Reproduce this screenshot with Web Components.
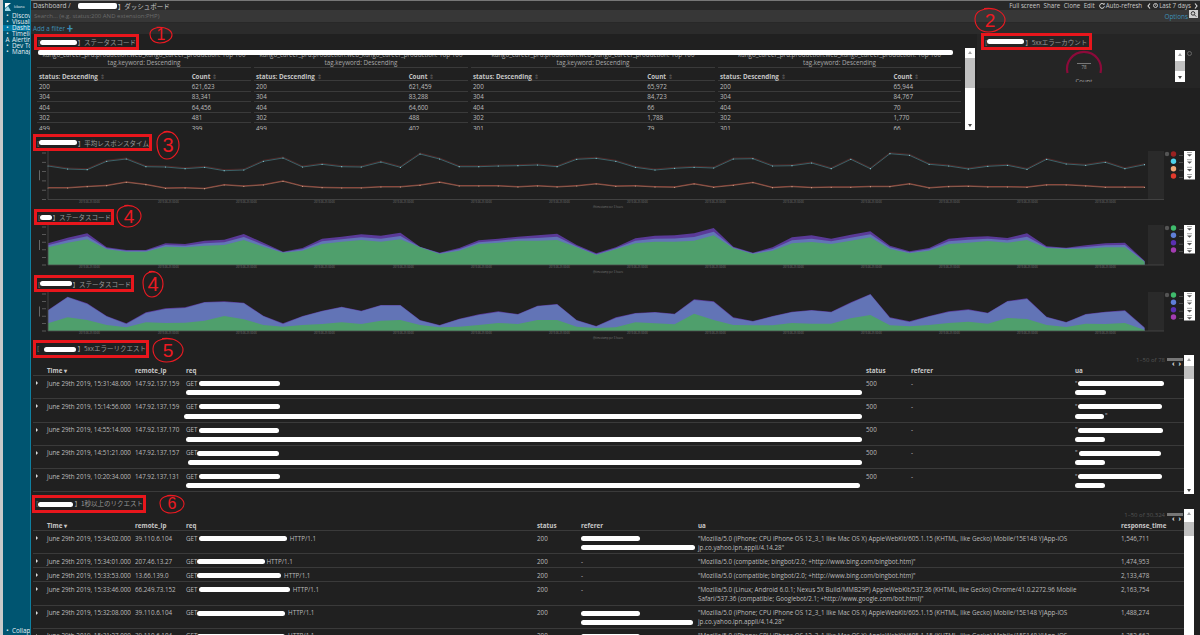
<!DOCTYPE html>
<html lang="ja">
<head>
<meta charset="utf-8">
<title>Dashboard</title>
<style>
  html, body { margin: 0; padding: 0; background: #202020; }
  body {
    width: 1200px;
    height: 635px;
    overflow: hidden;
    font-family: "Open Sans", "Noto Sans CJK JP", sans-serif;
    font-size: 6.25px;
    color: #bcbcbc;
  }
  k-blob { margin-right: 1px; }
</style>
</head>
<body>
<k-app>
  <k-rail slot="rail"></k-rail>

  <k-topbar></k-topbar>

  <k-row>
    <k-status-panel>
      <k-title style="width:105px;height:16px;margin:0 0 0 3px">[<k-blob w="38"></k-blob>】ステータスコード</k-title>
    </k-status-panel>
    <k-gauge-panel>
      <k-title style="width:111px;height:17px;margin:-1px 0 0 4px">[<k-blob w="37"></k-blob>】5xxエラーカウント</k-title>
    </k-gauge-panel>
  </k-row>

  <k-chart-panel style="height:74px">
    <k-title style="width:119px;height:17px;margin:0 0 0 2px">[<k-blob w="39"></k-blob>】平均レスポンスタイム</k-title>
    <k-chart kind="line" top="151" height="57" base="199.5" series="response"></k-chart>
  </k-chart-panel>
  <k-chart-panel style="height:66px">
    <k-title style="width:80px;height:16px;margin:1px 0 0 3px">[<k-blob w="14"></k-blob>】ステータスコード</k-title>
    <k-chart kind="area" top="225" height="49" base="265" series="statusA"></k-chart>
  </k-chart-panel>
  <k-chart-panel style="height:66px">
    <k-title style="width:100px;height:17px;margin:1px 0 0 3px">[<k-blob w="34"></k-blob>】ステータスコード</k-title>
    <k-chart kind="area" top="292" height="48" base="331" series="statusB"></k-chart>
  </k-chart-panel>

  <k-doc-panel pager="1–50 of 78" style="height:154px;--cols:14px 88px 51px 680px 45px 164px 1fr" thumb="11" thumbh="13">
    <k-title slot="title" style="width:116px;height:18px;margin:0 0 0 2px">[<k-blob w="33" style="margin-left:5px"></k-blob>】5xxエラーリクエスト</k-title>
    <k-doc-head><span>Time ▾</span><span>remote_ip</span><span>req</span><span>status</span><span>referer</span><span>ua</span></k-doc-head>
    <k-doc-row><span>June 29th 2019, 15:31:48.000</span><span>147.92.137.159</span><span>GET <k-blob w="81"></k-blob><br><k-blob w="676"></k-blob></span><span>500</span><span>-</span><span>"<k-blob w="86"></k-blob><br><k-blob w="31"></k-blob></span></k-doc-row>
    <k-doc-row><span>June 29th 2019, 15:14:56.000</span><span>147.92.137.159</span><span>GET <k-blob w="81"></k-blob><br><k-blob w="678" style="margin-left:-2px"></k-blob></span><span>500</span><span>-</span><span>"<k-blob w="84"></k-blob><br><k-blob w="29"></k-blob>"</span></k-doc-row>
    <k-doc-row><span>June 29th 2019, 14:55:14.000</span><span>147.92.137.170</span><span>GET <k-blob w="80"></k-blob><br><k-blob w="676"></k-blob></span><span>500</span><span>-</span><span>"<k-blob w="85"></k-blob><br><k-blob w="30"></k-blob></span></k-doc-row>
    <k-doc-row><span>June 29th 2019, 14:51:21.000</span><span>147.92.137.157</span><span>GET<k-blob w="82"></k-blob><br><k-blob w="674" style="margin-left:2px"></k-blob></span><span>500</span><span>-</span><span>"<k-blob w="82" style="margin-left:1px"></k-blob><br><k-blob w="30"></k-blob></span></k-doc-row>
    <k-doc-row><span>June 29th 2019, 10:20:34.000</span><span>147.92.137.131</span><span>GET <k-blob w="81"></k-blob><br><k-blob w="674"></k-blob></span><span>500</span><span>-</span><span>"<k-blob w="84"></k-blob><br><k-blob w="30"></k-blob></span></k-doc-row>
  </k-doc-panel>

  <k-doc-panel pager="1–50 of 30,324" style="flex:1;--cols:14px 88px 51px 351px 44px 117px 423px 1fr" thumb="13" thumbh="14">
    <k-title slot="title" style="width:114px;height:18px;margin:1px 0 0 1px">[<k-blob w="39"></k-blob>】1秒以上のリクエスト</k-title>
    <k-doc-head><span>Time ▾</span><span>remote_ip</span><span>req</span><span>status</span><span>referer</span><span>ua</span><span>response_time</span></k-doc-head>
    <k-doc-row><span>June 29th 2019, 15:34:02.000</span><span>39.110.6.104</span><span>GET <k-blob w="88"></k-blob> HTTP/1.1</span><span>200</span><span><k-blob w="59"></k-blob><br><k-blob w="114"></k-blob></span><span>"Mozilla/5.0 (iPhone; CPU iPhone OS 12_3_1 like Mac OS X) AppleWebKit/605.1.15 (KHTML, like Gecko) Mobile/15E148 YJApp-iOS<br>jp.co.yahoo.ipn.appli/4.14.28"</span><span>1,546,711</span></k-doc-row>
    <k-doc-row><span>June 29th 2019, 15:34:01.000</span><span>207.46.13.27</span><span>GET<k-blob w="68"></k-blob>HTTP/1.1</span><span>200</span><span>-</span><span>"Mozilla/5.0 (compatible; bingbot/2.0; +http://www.bing.com/bingbot.htm)"</span><span>1,474,953</span></k-doc-row>
    <k-doc-row><span>June 29th 2019, 15:33:53.000</span><span>13.66.139.0</span><span>GET<k-blob w="84"></k-blob> HTTP/1.1</span><span>200</span><span>-</span><span>"Mozilla/5.0 (compatible; bingbot/2.0; +http://www.bing.com/bingbot.htm)"</span><span>2,133,478</span></k-doc-row>
    <k-doc-row><span>June 29th 2019, 15:33:46.000</span><span>66.249.73.152</span><span>GET <k-blob w="91"></k-blob> HTTP/1.1</span><span>200</span><span>-</span><span>"Mozilla/5.0 (Linux; Android 6.0.1; Nexus 5X Build/MMB29P) AppleWebKit/537.36 (KHTML, like Gecko) Chrome/41.0.2272.96 Mobile<br>Safari/537.36 (compatible; Googlebot/2.1; +http://www.google.com/bot.html)"</span><span>2,163,754</span></k-doc-row>
    <k-doc-row><span>June 29th 2019, 15:32:08.000</span><span>39.110.6.104</span><span>GET<k-blob w="88"></k-blob> HTTP/1.1</span><span>200</span><span><k-blob w="59"></k-blob><br><k-blob w="112"></k-blob></span><span>"Mozilla/5.0 (iPhone; CPU iPhone OS 12_3_1 like Mac OS X) AppleWebKit/605.1.15 (KHTML, like Gecko) Mobile/15E148 YJApp-iOS<br>jp.co.yahoo.ipn.appli/4.14.28"</span><span>1,488,274</span></k-doc-row>
    <k-doc-row><span>June 29th 2019, 15:31:27.000</span><span>39.110.6.104</span><span>GET<k-blob w="88"></k-blob> HTTP/1.1</span><span>200</span><span><k-blob w="59"></k-blob><br><k-blob w="112"></k-blob></span><span>"Mozilla/5.0 (iPhone; CPU iPhone OS 12_3_1 like Mac OS X) AppleWebKit/605.1.15 (KHTML, like Gecko) Mobile/15E148 YJApp-iOS<br>jp.co.yahoo.ipn.appli/4.14.28"</span><span>1,352,663</span></k-doc-row>
  </k-doc-panel>

  <k-mark slot="marks" n="1" x="161" y="35" rx="11" ry="8" size="16"></k-mark>
  <k-mark slot="marks" n="2" x="990" y="20" rx="15" ry="12" size="19"></k-mark>
  <k-mark slot="marks" n="3" x="168" y="145" rx="11" ry="14" size="20"></k-mark>
  <k-mark slot="marks" n="4" x="129" y="216" rx="12" ry="11" size="19"></k-mark>
  <k-mark slot="marks" n="4" x="153" y="284" rx="10" ry="13" size="20"></k-mark>
  <k-mark slot="marks" n="5" x="168" y="350" rx="15" ry="12" size="19"></k-mark>
  <k-mark slot="marks" n="6" x="172" y="504" rx="12" ry="9" size="16"></k-mark>
</k-app>

<script>
// data read off the reference: x = 48 + i * 19.58, y = 130 + value / 3
const SERIES = {
  response: {
    teal: [108,117,119,94,87,110,111,116,112,122,120,94,84,111,103,110,111,96,112,72,87,110,110,108,107,105,110,88,85,94,112,120,115,112,114,87,86,108,107,99,116,88,116,71,76,103,108,117,109,106,118,88,102,106,97,116,104],
    orange: [174,174,170,167,157,164,175,174,176,165,169,165,154,169,173,174,174,171,171,166,157,168,168,168,171,168,171,168,162,169,168,171,172,162,172,166,158,173,170,173,172,172,170,170,162,174,170,169,171,171,172,165,165,168,172,172,172],
    legend: ["#9a2222", "#4fd2ea", "#f2a878", "#e33a2c"],
  },
  statusA: {
    green: [352,338,328,358,365,365,350,352,347,345,330,350,368,362,342,335,330,335,328,352,372,362,342,338,332,332,330,352,375,358,340,335,335,332,316,355,372,362,340,336,342,332,322,357,370,362,342,338,333,338,330,354,357,356,352,352,395],
    top: [340,323,310,352,360,360,340,342,332,329,312,338,365,354,326,320,313,317,308,350,368,354,331,326,320,316,311,345,370,352,325,317,316,310,294,350,368,352,322,316,326,314,304,347,364,354,326,321,319,324,310,349,353,346,340,338,392],
    legend: ["#3fbb6c", "#5f7fd8", "#5a30b2", "#a33cb2"],
  },
  statusB: {
    green: [580,562,570,585,592,577,579,578,572,558,568,585,590,585,582,577,582,572,570,585,592,590,585,579,582,570,570,590,594,592,577,580,583,551,570,585,586,586,579,581,581,565,555,586,589,585,579,575,581,564,567,585,591,581,582,579,600],
    top: [540,500,520,558,580,547,535,532,516,514,518,557,580,558,542,530,542,525,525,570,585,566,553,544,552,527,522,570,588,562,549,546,551,508,514,562,573,558,545,540,545,517,492,562,574,558,544,538,548,513,505,560,576,552,545,541,592],
    thin: true,
    legend: ["#3fbb6c", "#5f7fd8", "#5a30b2", "#a33cb2"],
  },
};

const px = (i) => 48 + i * 19.58;
const py = (v) => 130 + v / 3;

class KApp extends HTMLElement {
  constructor() {
    super();
    this.attachShadow({ mode: "open" });
  }
  connectedCallback() {
    this.shadowRoot.innerHTML = `
    <style>
    :host { display: flex; position: relative; width: 1200px; height: 635px; overflow: hidden; }
    .edge { width: 3px; background: #c9c9c9; flex: none; }
    main { flex: 1; min-width: 0; display: flex; flex-direction: column; height: 635px; overflow: hidden; }
    </style>
    <div class="edge"></div>
    <slot name="rail"></slot>
    <main><slot></slot></main>
    <slot name="marks"></slot>
    `;
  }
}

class KRail extends HTMLElement {
  constructor() {
    super();
    this.attachShadow({ mode: "open" });
  }
  connectedCallback() {
    const items = [["•", "Discover"], ["•", "Visualize"], ["•", "Dashboard", true], ["•", "Timelion"], ["A", "Alerting"], ["•", "Dev Tools"], ["•", "Management"]];
    this.shadowRoot.innerHTML = `
    <style>
    :host { display: flex; flex-direction: column; flex: none; width: 28px; height: 635px; box-sizing: border-box; background: #005571; border-right: 1px solid #0f7f9f; color: #e6eef2; font-size: 6.3px; line-height: 6px; overflow: hidden; }
    .logo { display: flex; align-items: center; gap: 3px; height: 13px; padding-left: 2px; flex: none; font-size: 3.4px; }
    a { display: flex; height: 6px; white-space: nowrap; overflow: hidden; flex: none; }
    a.on { background: #0079a5; }
    a b { flex: none; width: 9px; text-align: center; font-weight: normal; }
    .collapse { margin-top: auto; padding-bottom: 0; height: 7px; }
    </style>
    <div class="logo">
      <svg width="6" height="8" viewBox="0 0 6 8"><path d="M0 0h6L0 5z" fill="#fff"/><path d="M0 6l3-3 3 5H0z" fill="#9fd8e8"/></svg>
      <span>kibana</span>
    </div>
    ${items.map(([icon, name, on]) => `<a class="${on ? "on" : ""}"><b>${icon}</b>${name}</a>`).join("")}
    <a class="collapse"><b>•</b>Collapse</a>
    `;
  }
}

class KTopbar extends HTMLElement {
  constructor() {
    super();
    this.attachShadow({ mode: "open" });
  }
  connectedCallback() {
    this.shadowRoot.innerHTML = `
    <style>
    :host { display: block; flex: none; height: 34px; background: #282828; font-size: 6.2px; color: #c8c8c8; }
    .nav { display: flex; align-items: center; height: 10px; padding: 0 2px 0 2px; box-sizing: border-box; border-top: 1px solid #777; white-space: nowrap; }
    .blob { display: inline-block; width: 39px; height: 6px; margin: 0 1px 0 7px; border-radius: 2px; background: #fff; }
    .title { font-size: 6.5px; }
    .right { margin-left: auto; display: flex; align-items: center; }
    .right span { margin-left: 3.5px; }
    .right svg { margin-left: 4px; }
    .search { display: flex; height: 12px; background: #373737; align-items: center; padding-left: 3px; color: #6b6b6b; font-size: 6px; }
    .search em { margin-left: auto; margin-right: 12px; font-style: normal; color: #3d8fb6; font-size: 6.4px; }
    .search svg { position: absolute; left: 1189px; top: 10px; }
    .filter { height: 11px; margin-top: 1px; background: #2b2b2b; color: #3d8fb6; padding-left: 2px; line-height: 11px; font-size: 6.3px; }
    </style>
    <div class="nav">
      <span class="title">Dashboard /</span><span class="blob"></span><span class="title">】ダッシュボード</span>
      <div class="right">
        <span>Full screen</span><span>Share</span><span>Clone</span><span>Edit</span>
        <svg width="6" height="6" viewBox="0 0 6 6"><path d="M5 1.5A2.4 2.4 0 1 0 5.4 3.4" fill="none" stroke="#ddd" stroke-width="1"/><path d="M3.8 1.4h2V0z" fill="#ddd"/></svg>
        <span style="margin-left:1px">Auto-refresh</span>
        <svg width="4" height="6" viewBox="0 0 4 6" style="margin-left:5px"><path d="M3 .5L1 3l2 2.5" fill="none" stroke="#ddd" stroke-width="1.1"/></svg>
        <svg width="5" height="5" viewBox="0 0 6 6" style="margin-left:2px"><circle cx="3" cy="3" r="2.4" fill="none" stroke="#ddd"/><path d="M3 1.5V3l1 .8" fill="none" stroke="#ddd" stroke-width=".7"/></svg>
        <span style="margin-left:1px">Last 7 days</span>
        <svg width="4" height="6" viewBox="0 0 4 6" style="margin-left:3px"><path d="M1 .5L3 3 1 5.5" fill="none" stroke="#ddd" stroke-width="1.1"/></svg>
      </div>
    </div>
    <div class="search">
      <span>Search... (e.g. status:200 AND extension:PHP)</span>
      <em>Options</em>
      <svg width="9" height="8" viewBox="0 0 9 8"><rect width="9" height="8" fill="#cfcfcf"/><circle cx="4" cy="3.4" r="1.8" fill="none" stroke="#333"/><path d="M5.4 4.8l1.8 1.8" stroke="#333"/></svg>
    </div>
    <div class="filter">Add a filter ✚</div>
    `;
  }
}

class KBlob extends HTMLElement {
  constructor() {
    super();
    this.attachShadow({ mode: "open" });
  }
  connectedCallback() {
    this.shadowRoot.innerHTML = `
    <style>
    :host { display: inline-block; height: 5px; vertical-align: -0.5px; border-radius: 2.5px; background: #fff; width: ${this.getAttribute("w")}px; }
    </style>
    `;
  }
}

class KTitle extends HTMLElement {
  constructor() {
    super();
    this.attachShadow({ mode: "open" });
  }
  connectedCallback() {
    this.shadowRoot.innerHTML = `
    <style>
    :host { display: flex; align-items: center; box-sizing: border-box; border: 3px solid #e8161c; padding-left: 1px; flex: none; white-space: nowrap; overflow: hidden; font-size: 6.5px; color: #989898; font-family: "Noto Sans CJK JP", "Open Sans", sans-serif; }
    </style>
    <slot></slot>
    `;
  }
}

class KRow extends HTMLElement {
  constructor() {
    super();
    this.attachShadow({ mode: "open" });
  }
  connectedCallback() {
    this.shadowRoot.innerHTML = `
    <style>
    :host { display: flex; flex: none; height: 100px; align-items: flex-start; }
    </style>
    <slot></slot>
    `;
  }
}

class KScrollbar extends HTMLElement {
  constructor() {
    super();
    this.attachShadow({ mode: "open" });
  }
  connectedCallback() {
    const top = this.getAttribute("thumb");
    const h = this.getAttribute("thumbh");
    this.shadowRoot.innerHTML = `
    <style>
    :host { display: block; position: relative; box-sizing: border-box; flex: none; width: 10px; background: #fff; }
    .up, .down { position: absolute; left: 2.5px; width: 0; height: 0; border-left: 2.5px solid transparent; border-right: 2.5px solid transparent; }
    .up { top: 3px; border-bottom: 3px solid #a5a5a5; }
    .down { bottom: 3px; border-top: 3px solid #444; }
    .thumb { position: absolute; left: 0; right: 0; background: #c1c1c1; top: ${top}px; height: ${h}px; }
    </style>
    <i class="up"></i><i class="thumb"></i><i class="down"></i>
    `;
  }
}

class KTerms extends HTMLElement {
  constructor() {
    super();
    this.attachShadow({ mode: "open" });
  }
  connectedCallback() {
    const rows = JSON.parse(this.getAttribute("rows"));
    this.shadowRoot.innerHTML = `
    <style>
    :host { display: block; flex: none; height: 80px; overflow: hidden; line-height: 8.3px; text-align: center; }
    .cap { height: 18px; border-bottom: 1px solid #3a3a3a; padding-top: 1px; box-sizing: border-box; white-space: nowrap; overflow: hidden; color: #a8a8a8; }
    .line { display: grid; grid-template-columns: 72% 1fr; text-align: left; padding: 1.5px 0 0 2px; height: 10.6px; line-height: 8.1px; box-sizing: border-box; border-bottom: 1px solid #3a3a3a; }
    .line.head { height: 13px; padding-top: 5px; font-weight: 700; color: #c4c4c4; }
    .line.head i { font-style: normal; color: #666; font-weight: 400; }
    </style>
    <div class="cap">kango_career_prd:production:web_kango_career_production: Top 100<br>tag.keyword: Descending</div>
    <div class="line head"><span>status: Descending <i>⇕</i></span><span>Count <i>⇕</i></span></div>
    ${rows.map((r) => `<div class="line"><span>${r[0]}</span><span>${r[1]}</span></div>`).join("")}
    `;
  }
}

class KStatusPanel extends HTMLElement {
  constructor() {
    super();
    this.attachShadow({ mode: "open" });
  }
  connectedCallback() {
    const tables = [
      [214, [["200", "621,623"], ["304", "83,341"], ["404", "64,456"], ["302", "481"], ["499", "399"]]],
      [214, [["200", "621,459"], ["304", "83,288"], ["404", "64,600"], ["302", "488"], ["499", "402"]]],
      [244, [["200", "65,972"], ["304", "84,723"], ["404", "66"], ["302", "1,788"], ["301", "79"]]],
      [243, [["200", "65,944"], ["304", "84,767"], ["404", "70"], ["302", "1,770"], ["301", "66"]]],
    ];
    this.shadowRoot.innerHTML = `
    <style>
    :host { display: grid; grid-template-columns: 934px 10px; grid-template-rows: auto; width: 946px; flex: none; height: 100px; }
    .left { display: flex; flex-direction: column; min-width: 0; }
    .terms { position: relative; display: flex; gap: 3px; padding-left: 6px; }
    .bar { position: absolute; left: 7px; top: 0; width: 915px; height: 4.5px; background: #fff; border-radius: 2px; }
    k-scrollbar { margin-top: 14px; height: 82px; }
    </style>
    <div class="left">
      <slot></slot>
      <div class="terms">
        ${tables.map(([w, rows]) => `<k-terms style="width:${w}px" rows='${JSON.stringify(rows)}'></k-terms>`).join("")}
        <div class="bar"></div>
      </div>
    </div>
    <k-scrollbar thumb="10" thumbh="30"></k-scrollbar>
    `;
  }
}

class KGaugePanel extends HTMLElement {
  constructor() {
    super();
    this.attachShadow({ mode: "open" });
  }
  connectedCallback() {
    this.shadowRoot.innerHTML = `
    <style>
    :host { display: block; flex: none; width: 223px; height: 54px; background: #252525; }
    .body { display: flex; height: 32px; overflow: hidden; padding-left: 87px; box-sizing: border-box; }
    svg text { font-family: "Open Sans", sans-serif; fill: #a8a8a8; text-anchor: middle; }
    k-scrollbar { margin-left: auto; height: 32px; }
    .info { flex: none; width: 5px; height: 5px; margin: 1px 8px 0 2px; border-radius: 50%; border: 1px solid #666; box-sizing: border-box; }
    </style>
    <slot></slot>
    <div class="body">
      <svg width="40" height="32" viewBox="0 0 40 32">
        <path d="M3.5 23A17 17 0 1 1 36.5 23" fill="none" stroke="#8c0a3a" stroke-width="2.2"/>
        <rect x="13" y="13" width="14" height="1" fill="#777"/>
        <text x="20" y="19" font-size="4.5">78</text>
        <text x="20" y="33" font-size="6">Count</text>
      </svg>
      <k-scrollbar thumb="11" thumbh="10"></k-scrollbar>
      <div class="info"></div>
    </div>
    `;
  }
}

class KChartPanel extends HTMLElement {
  constructor() {
    super();
    this.attachShadow({ mode: "open" });
  }
  connectedCallback() {
    this.shadowRoot.innerHTML = `
    <style>
    :host { display: flex; flex-direction: column; flex: none; overflow: hidden; }
    </style>
    <slot></slot>
    `;
  }
}

class KChart extends HTMLElement {
  constructor() {
    super();
    this.attachShadow({ mode: "open" });
  }

  line(values, fn) {
    return values.map((v, i) => `${i ? "L" : "M"}${px(i).toFixed(1)} ${fn(v, i).toFixed(1)}`).join("");
  }

  area(top, base) {
    const upper = top.map((v, i) => `${i ? "L" : "M"}${px(i).toFixed(1)} ${v.toFixed(1)}`).join("");
    return `${upper}L${px(top.length - 1).toFixed(1)} ${base}L48 ${base}Z`;
  }

  plot(data, base) {
    if (this.getAttribute("kind") === "line") {
      const dots = (vals, color) => vals.map((v, i) => `<circle cx="${px(i).toFixed(1)}" cy="${py(v).toFixed(1)}" r=".6" fill="${color}"/>`).join("");
      return `
        <path d="${this.line(data.teal, (v) => py(v) - 1)}" fill="none" stroke="#5e2a2a" stroke-width=".7"/>
        <path d="${this.line(data.teal, py)}" fill="none" stroke="#44727a" stroke-width=".8"/>
        <path d="${this.line(data.orange, (v) => py(v) - .5)}" fill="none" stroke="#a8423a" stroke-width=".7"/>
        <path d="${this.line(data.orange, py)}" fill="none" stroke="#a0705c" stroke-width=".7"/>
        ${dots(data.teal, "#8fd0da")}${dots(data.orange, "#d8a088")}`;
    }
    const green = data.green.map(py);
    const top = data.top.map(py);
    const mid = top.map((v, i) => data.thin ? v + .6 : v + (green[i] - v) * .5);
    return `
      <path d="${this.area(top, base)}" fill="#5a3a98"/>
      <path d="${this.area(mid, base)}" fill="#6274b6"/>
      <path d="${this.area(green, base)}" fill="#4f9f6c"/>`;
  }

  legend(colors, first) {
    const ys = [0, 7.2, 14.8, 22];
    return `
      <rect x="1148" y="${first}" width="16" height="${this.base - first}" fill="#2a2a2a"/>
      <circle cx="1167" cy="${first + 3}" r="2.2" fill="#555"/>
      ${colors.map((c, i) => `
        <circle cx="1173.5" cy="${first + 3 + ys[i]}" r="2.7" fill="${c}"/>
        <rect x="1179" y="${first + 4 + ys[i]}" width="4" height=".8" fill="#555"/>`).join("")}`;
  }

  connectedCallback() {
    const top = +this.getAttribute("top");
    const h = +this.getAttribute("height");
    const base = +this.getAttribute("base");
    this.base = base;
    const data = SERIES[this.getAttribute("series")];
    const first = top;
    const ticks = [86, 165, 243, 321, 400, 478, 556, 634, 712, 790, 868, 946, 1024, 1102];
    const yTicks = [0, 1, 2, 3, 4, 5].map((i) => base - i * (base - top - 2) / 5);
    this.shadowRoot.innerHTML = `
    <style>
    :host { display: block; flex: none; height: ${h}px; }
    svg { display: block; }
    text { font-family: "Open Sans", sans-serif; fill: #777; }
    </style>
    <svg width="1169" height="${h}" viewBox="31 ${top} 1169 ${h}">
      ${this.legend(data.legend, first)}
      ${this.plot(data, base)}
      <path d="M48 ${top}V${base}H1164" fill="none" stroke="#4a4a4a" stroke-width=".8"/>
      ${yTicks.map((y) => `<rect x="42" y="${y - .4}" width="4" height=".8" fill="#666"/>`).join("")}
      <rect x="39" y="${(top + base) / 2 - 5}" width="1" height="10" fill="#666"/>
      ${ticks.map((x) => `<text x="${x - 7}" y="${base + 3}" font-size="2.6">2019-06-25 00:00</text>`).join("")}
      <text x="593" y="${base + 8}" font-size="2.6">@timestamp per 3 hours</text>
      <rect x="1184" y="${first - 1}" width="11" height="29.5" fill="#fff"/>
      ${[0, 7.2, 14.8, 22].map((d) => `
        <rect x="1187" y="${first + 1 + d}" width="5" height="1" fill="#aaa"/>
        <path d="M1187 ${first + 3.2 + d}h5l-2.5 2.4z" fill="#555"/>`).join("")}
    </svg>
    `;
  }
}

class KDocPanel extends HTMLElement {
  constructor() {
    super();
    this.attachShadow({ mode: "open" });
  }
  connectedCallback() {
    this.shadowRoot.innerHTML = `
    <style>
    :host { display: grid; grid-template-columns: 1153px 10px; flex: none; min-height: 0; overflow: hidden; line-height: 9.3px; }
    .left { display: flex; flex-direction: column; min-width: 0; }
    .pager { display: flex; justify-content: flex-end; align-items: flex-start; height: 8px; line-height: 5px; flex: none; color: #555; padding-right: 1px; white-space: nowrap; font-size: 6px; position: relative; }
    .pager b { display: inline-block; width: 16px; height: 3px; margin: 0 0 0 2px; background: #777; }
    .pager i { position: absolute; right: 2px; top: 3px; font-style: normal; font-weight: 700; color: #eee; letter-spacing: 1px; font-size: 7px; }
    .table { margin-left: 2px; }
    k-scrollbar { margin-top: 15px; height: 140px; }
    </style>
    <div class="left">
      <slot name="title"></slot>
      <div class="pager"><span>${this.getAttribute("pager")}</span><b></b><i>‹ ›</i></div>
      <div class="table"><slot></slot></div>
    </div>
    <k-scrollbar thumb="${this.getAttribute("thumb")}" thumbh="${this.getAttribute("thumbh")}"></k-scrollbar>
    `;
  }
}

class KDocHead extends HTMLElement {
  constructor() {
    super();
    this.attachShadow({ mode: "open" });
  }
  connectedCallback() {
    this.shadowRoot.innerHTML = `
    <style>
    :host { display: grid; grid-template-columns: var(--cols); height: 10px; box-sizing: border-box; border-bottom: 1px solid #3a3a3a; font-weight: 700; color: #c8c8c8; white-space: nowrap; }
    </style>
    <i></i><slot></slot>
    `;
  }
}

class KDocRow extends HTMLElement {
  constructor() {
    super();
    this.attachShadow({ mode: "open" });
  }
  connectedCallback() {
    this.shadowRoot.innerHTML = `
    <style>
    :host { display: grid; grid-template-columns: var(--cols); box-sizing: border-box; padding: 2.5px 0 1.2px; border-bottom: 1px solid #3a3a3a; white-space: nowrap; }
    .arrow { display: block; width: 0; height: 0; margin: 2.5px 0 0 3px; border-left: 2.5px solid #ddd; border-top: 2px solid transparent; border-bottom: 2px solid transparent; }
    </style>
    <i class="arrow"></i><slot></slot>
    `;
  }
}

class KMark extends HTMLElement {
  constructor() {
    super();
    this.attachShadow({ mode: "open" });
  }
  connectedCallback() {
    const rx = +this.getAttribute("rx");
    const ry = +this.getAttribute("ry");
    const ring = rx ? `
      <svg width="${rx * 2 + 4}" height="${ry * 2 + 4}" viewBox="${-rx - 2} ${-ry - 2} ${rx * 2 + 4} ${ry * 2 + 4}">
        <path d="M${-rx * .4} ${-ry * .95}C${rx * .5} ${-ry * 1.1} ${rx} ${-ry * .5} ${rx} 0S${rx * .5} ${ry} ${-rx * .1} ${ry}S${-rx} ${ry * .5} ${-rx} ${-ry * .1}S${-rx * .5} ${-ry * 1.05} ${rx * .3} ${-ry * .9}" fill="none" stroke="#ec1a22" stroke-width="1.1"/>
      </svg>` : "";
    this.shadowRoot.innerHTML = `
    <style>
    :host { position: absolute; left: ${this.getAttribute("x")}px; top: ${this.getAttribute("y")}px; width: 0; height: 0; }
    svg { position: absolute; transform: translate(-50%, -50%); }
    span { position: absolute; transform: translate(-50%, -50%); font-family: "Liberation Sans", sans-serif; font-size: ${this.getAttribute("size")}px; line-height: 1; color: #ec1a22; }
    </style>
    ${ring}<span>${this.getAttribute("n")}</span>
    `;
  }
}

customElements.define("k-app", KApp);
customElements.define("k-rail", KRail);
customElements.define("k-topbar", KTopbar);
customElements.define("k-blob", KBlob);
customElements.define("k-title", KTitle);
customElements.define("k-row", KRow);
customElements.define("k-scrollbar", KScrollbar);
customElements.define("k-terms", KTerms);
customElements.define("k-status-panel", KStatusPanel);
customElements.define("k-gauge-panel", KGaugePanel);
customElements.define("k-chart-panel", KChartPanel);
customElements.define("k-chart", KChart);
customElements.define("k-doc-panel", KDocPanel);
customElements.define("k-doc-head", KDocHead);
customElements.define("k-doc-row", KDocRow);
customElements.define("k-mark", KMark);
</script>
</body>
</html>
